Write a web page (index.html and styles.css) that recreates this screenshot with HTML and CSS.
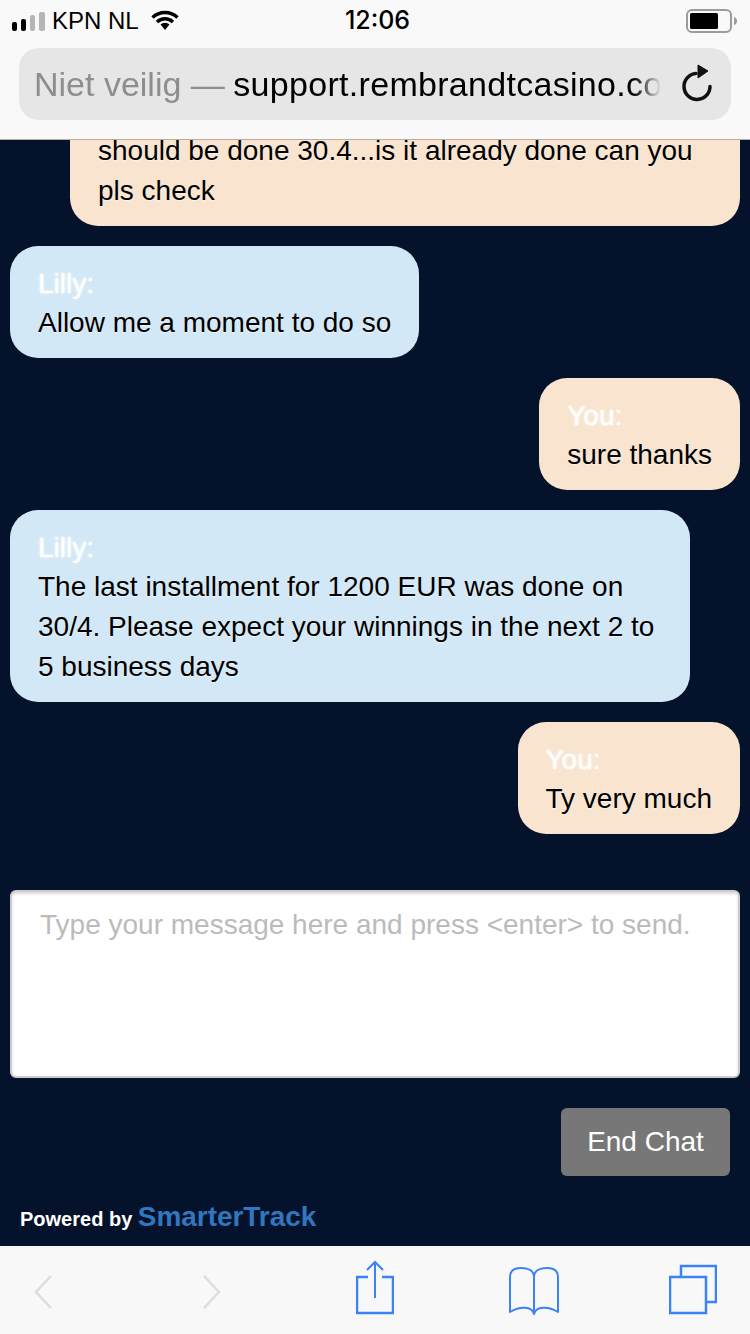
FILE: index.html
```html
<!DOCTYPE html>
<html>
<head>
	<meta charset="utf-8">
	<title>Live Chat</title>
	<link rel="stylesheet" href="styles.css">
</head>
<body>
<div class="app">
	<header class="browser">
		<div class="status">
			<div class="status-left">
				<svg class="signal" width="34" height="20" viewBox="0 0 34 20">
					<rect x="0" y="11" width="5" height="9" rx="2" fill="#000"/>
					<rect x="9" y="8" width="5" height="12" rx="2" fill="#000"/>
					<rect x="18" y="4" width="5" height="16" rx="2" fill="#b5b5b5"/>
					<rect x="27" y="1" width="6" height="19" rx="2" fill="#b5b5b5"/>
				</svg>
				<span class="carrier">KPN NL</span>
				<svg class="wifi" width="28" height="20" viewBox="0 0 28 20">
					<path d="M1.5 7.5a18 18 0 0 1 25 0" fill="none" stroke="#000" stroke-width="3.4"/>
					<path d="M6 12a11.500 11.500 0 0 1 16 0" fill="none" stroke="#000" stroke-width="3.4"/>
					<path d="M9.500 14.500a6.500 6.500 0 0 1 9 0L14 20z" fill="#000"/>
				</svg>
			</div>
			<span class="clock">12:06</span>
			<div class="status-right">
				<svg width="54" height="26" viewBox="0 0 54 26">
					<rect x="2" y="2" width="44" height="22" rx="5" fill="none" stroke="#9b9b9b" stroke-width="2"/>
					<rect x="5" y="5" width="28" height="16" rx="1.500" fill="#000"/>
					<path d="M49 9q3 1 3 4t-3 4z" fill="#9b9b9b"/>
				</svg>
			</div>
		</div>
		<div class="urlbar">
			<div class="url"><span class="url-muted">Niet veilig —</span> <span class="url-host">support.rembrandtcasino.com</span></div>
			<svg class="reload" width="34" height="40" viewBox="0 0 34 40">
				<path d="M15 9.500a13 13 0 1 0 14 13" fill="none" stroke="#111" stroke-width="3.500" stroke-linecap="round"/>
				<path d="M17 1l10 6-10 7z" fill="#111" stroke="#111" stroke-width="1" stroke-linejoin="round"/>
			</svg>
		</div>
	</header>

	<main class="chat">
		<div class="messages">
			<div class="msg msg-you msg-wide">
				should be done 30.4...is it already done can you pls check
			</div>
			<div class="msg msg-agent">
				<div class="who">Lilly:</div>
				Allow me a moment to do so
			</div>
			<div class="msg msg-you">
				<div class="who">You:</div>
				sure thanks
			</div>
			<div class="msg msg-agent msg-long">
				<div class="who">Lilly:</div>
				The last installment for 1200 EUR was done on 30/4. Please expect your winnings in the next 2 to 5 business days
			</div>
			<div class="msg msg-you">
				<div class="who">You:</div>
				Ty very much
			</div>
		</div>
		<textarea class="input" placeholder="Type your message here and press <enter> to send."></textarea>
		<div class="actions">
			<button class="end-chat" type="button">End Chat</button>
		</div>
		<div class="powered">Powered by <span class="brand">SmarterTrack</span></div>
	</main>

	<footer class="toolbar">
		<svg class="tool-back" width="18" height="60" viewBox="0 0 18 60">
			<path d="M17 16L2 32l15 16" fill="none" stroke="#dcdcdc" stroke-width="2.500"/>
		</svg>
		<svg class="tool-fwd" width="18" height="60" viewBox="0 0 18 60">
			<path d="M1 16l15 16L1 48" fill="none" stroke="#dcdcdc" stroke-width="2.500"/>
		</svg>
		<svg class="tool-share" width="38" height="60" viewBox="0 0 38 60">
			<path d="M12 17H1v36h36V17H26" fill="none" stroke="#3b82f6" stroke-width="2.500"/>
			<path d="M19 38V3M11 10l8-8 8 8" fill="none" stroke="#3b82f6" stroke-width="2"/>
		</svg>
		<svg class="tool-book" width="50" height="60" viewBox="0 0 50 60">
			<path d="M25 54c-2-8-14-8-24-2V17c0-8 6-9 11-9 6 0 13 2 13 9 0-7 7-9 13-9 5 0 11 1 11 9v35c-10-6-22-6-24 2zM25 17v37" fill="none" stroke="#3b82f6" stroke-width="2" stroke-linejoin="round"/>
		</svg>
		<svg class="tool-tabs" width="48" height="60" viewBox="0 0 48 60">
			<rect x="1" y="17" width="36" height="36" fill="none" stroke="#3b82f6" stroke-width="2.500"/>
			<path d="M12 17V6h35v36H37" fill="none" stroke="#3b82f6" stroke-width="2.500"/>
		</svg>
	</footer>
</div>
</body>
</html>
```

FILE: styles.css
```css
html, body {
	margin: 0;
	padding: 0;
}
body {
	font-family: "Liberation Sans", Arial, sans-serif;
	color: #000;
}
.app {
	width: 750px;
	height: 1334px;
	display: flex;
	flex-direction: column;
	overflow: hidden;
	background-color: #05122b;
}

/* safari chrome */
.browser {
	height: 140px;
	flex-shrink: 0;
	box-sizing: border-box;
	background-color: #f9f9f9;
	border-bottom: 1px solid #b9ae9f;
}
.status {
	height: 48px;
	display: grid;
	grid-template-columns: 1fr auto 1fr;
	align-items: center;
	padding: 0 11px 6px 12px;
	box-sizing: border-box;
}
.status-left {
	display: flex;
	align-items: center;
}
.carrier {
	font-size: 24px;
	margin-left: 6px;
}
.wifi {
	margin-left: 12px;
	margin-bottom: 2px;
}
.clock {
	font-size: 25px;
	font-family: Inter, "Liberation Sans", sans-serif;
	font-weight: 500;
	margin-left: 4px;
	margin-bottom: 3px;
}
.status-right {
	display: flex;
	justify-content: flex-end;
}
.urlbar {
	height: 72px;
	margin: 0 19px;
	padding: 0 15px;
	box-sizing: border-box;
	display: flex;
	align-items: center;
	justify-content: space-between;
	background-color: #e6e6e6;
	border-radius: 20px;
}
.url {
	width: 627px;
	font-size: 34px;
	white-space: nowrap;
	overflow: hidden;
	-webkit-mask-image: linear-gradient(to right, #000 600px, transparent 627px);
	mask-image: linear-gradient(to right, #000 600px, transparent 627px);
}
.url-muted {
	color: #8e8e8e;
}
.url-host {
	margin-left: -1px;
	letter-spacing: .3px;
}
.reload {
	margin-right: 1px;
}

/* chat */
.chat {
	flex: 1;
	min-height: 0;
	display: flex;
	flex-direction: column;
}
.messages {
	flex: 1;
	min-height: 0;
	overflow: hidden;
	display: flex;
	flex-direction: column;
	justify-content: flex-end;
	gap: 20px;
	padding: 0 10px 56px;
}
.msg {
	flex-shrink: 0;
	box-sizing: border-box;
	max-width: 680px;
	padding: 18px 28px 15px;
	border-radius: 28px;
	font-size: 28px;
	line-height: 40px;
	text-shadow: 0 1px 1px rgba(255,255,255,.6);
}
.msg-agent {
	align-self: flex-start;
	background-color: #d3e8f6;
}
.msg-you {
	align-self: flex-end;
	background-color: #f8e4cf;
}
.msg-wide {
	width: 670px;
}
.msg-long {
	width: 680px;
}
.who {
	height: 39px;
	color: #fff;
	text-shadow: 0 0 3px #fff;
}
.input {
	display: block;
	flex-shrink: 0;
	width: 730px;
	height: 188px;
	margin: 0 10px;
	padding: 13px 28px;
	box-sizing: border-box;
	border: 2px solid #ccc;
	border-radius: 6px;
	background-color: #fff;
	box-shadow: inset 0 2px 3px rgba(0,0,0,.15);
	font-family: "Liberation Sans", Arial, sans-serif;
	font-size: 28px;
	line-height: 40px;
	resize: none;
}
.input::placeholder {
	color: #bbb;
	opacity: 1;
}
.actions {
	display: flex;
	justify-content: flex-end;
	flex-shrink: 0;
	padding: 30px 20px 0 0;
}
.end-chat {
	width: 169px;
	height: 68px;
	padding: 0;
	border: 0;
	border-radius: 6px;
	background-color: #777;
	color: #fff;
	font-family: "Liberation Sans", Arial, sans-serif;
	font-size: 28px;
}
.powered {
	flex-shrink: 0;
	height: 70px;
	box-sizing: border-box;
	padding: 21px 0 0 20px;
	color: #fff;
	font-size: 20px;
	font-weight: bold;
	line-height: 40px;
}
.brand {
	margin-left: 0;
	color: #3077bf;
	font-size: 28px;
	letter-spacing: -.05px;
}

/* bottom bar */
.toolbar {
	height: 88px;
	flex-shrink: 0;
	box-sizing: border-box;
	padding: 14px 0 0 34px;
	display: flex;
	align-items: flex-start;
	background-color: #f8f8f8;
}
.tool-fwd {
	margin-left: 151px;
}
.tool-share {
	margin-left: 135px;
}
.tool-book {
	margin-left: 115px;
}
.tool-tabs {
	margin-left: 110px;
}
```
